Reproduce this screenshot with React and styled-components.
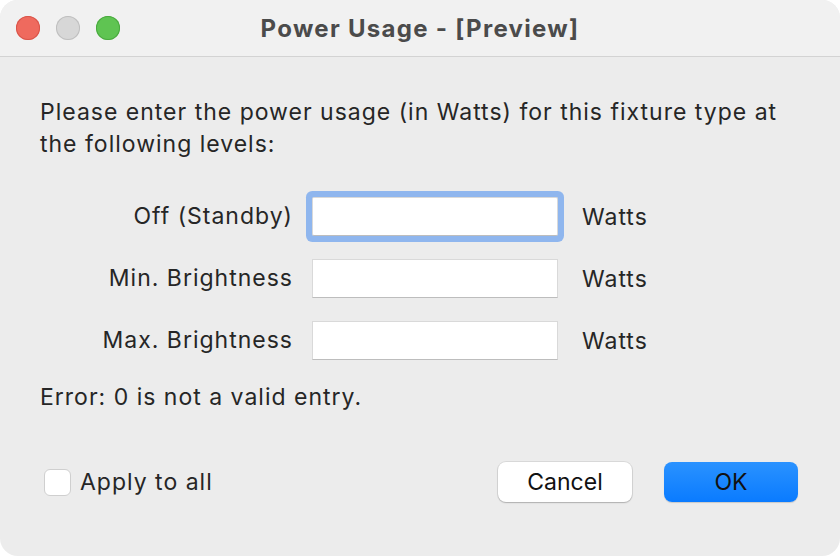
import React from "react";
import styled, { createGlobalStyle } from "styled-components";

const Global = createGlobalStyle`
  html, body { margin: 0; padding: 0; background: #ffffff; }
  body { font-family: Inter, "Noto Sans", "Liberation Sans", sans-serif; }
  * { box-sizing: border-box; }
`;

const Window = styled.div`
  width: 840px;
  height: 556px;
  background: #ececec;
  border-radius: 18px;
  overflow: hidden;
  display: flex;
  flex-direction: column;
  color: #262626;
`;

const TitleBar = styled.div`
  height: 57px;
  flex: none;
  background: #f1f1f1;
  border-bottom: 1px solid #d3d3d3;
  display: flex;
  align-items: center;
  position: relative;
  padding-left: 16px;
`;

const Lights = styled.div`
  display: flex;
  gap: 16px;
  position: relative;
  z-index: 1;
`;

const Light = styled.span`
  width: 24px;
  height: 24px;
  border-radius: 50%;
  background: ${(p) => p.$c};
  box-shadow: inset 0 0 0 1px ${(p) => p.$b};
`;

const Title = styled.div`
  position: absolute;
  inset: 0;
  display: flex;
  align-items: center;
  justify-content: center;
  font-size: 24px;
  font-weight: 700;
  color: #4b4b4b;
  letter-spacing: 1.3px;
`;

const Content = styled.div`
  flex: 1;
  display: flex;
  flex-direction: column;
  padding: 39px 42px 54px 40px;
  font-size: 23px;
  letter-spacing: 1px;
`;

const Intro = styled.p`
  margin: 0;
  line-height: 32px;
`;

const Form = styled.div`
  margin-top: 37px;
  display: grid;
  grid-template-columns: 272px 246px auto;
  row-gap: 23px;
  align-items: center;
`;

const Label = styled.label`
  text-align: right;
  padding-right: 19px;
  line-height: 39px;
  white-space: nowrap;
`;

const Input = styled.input`
  width: 246px;
  height: 39px;
  border: 1px solid #d9d9d9;
  border-bottom-color: #bdbdbd;
  background: #ffffff;
  outline: none;
  font: inherit;
  padding: 0 6px;
  border-radius: ${(p) => (p.$focus ? "2px" : "0")};
  box-shadow: ${(p) => (p.$focus ? "0 0 0 6px #8fb6ee" : "none")};
`;

const Unit = styled.span`
  padding-left: 24px;
`;

const Error = styled.div`
  margin-top: 23px;
  line-height: 28px;
`;

const Footer = styled.div`
  margin-top: auto;
  display: flex;
  align-items: center;
`;

const CheckRow = styled.label`
  display: flex;
  align-items: center;
  gap: 9px;
  margin-left: 4px;
`;

const Box = styled.span`
  width: 27px;
  height: 27px;
  border-radius: 6px;
  background: #ffffff;
  border: 1px solid #cfcfcf;
`;

const Spacer = styled.div`
  flex: 1;
`;

const Button = styled.button`
  width: 134px;
  height: 40px;
  border-radius: 8px;
  font: inherit;
  color: #111111;
  border: none;
  padding: 0;
  margin-left: ${(p) => (p.$gap ? "32px" : "0")};
  background: ${(p) =>
    p.$primary ? "linear-gradient(#2a92ff, #0a7bff)" : "#ffffff"};
  box-shadow: ${(p) =>
    p.$primary
      ? "0 1px 1px rgba(0,0,0,0.15)"
      : "0 0 0 1px rgba(0,0,0,0.08), 0 1px 1.5px rgba(0,0,0,0.2)"};
`;

const rows = ["Off (Standby)", "Min. Brightness", "Max. Brightness"];

export default function App() {
  return (
    <>
      <Global />
      <Window>
        <TitleBar>
          <Lights>
            <Light $c="#ef6a5e" $b="#d8554a" />
            <Light $c="#d7d7d7" $b="#bfbfbf" />
            <Light $c="#5fc452" $b="#4aa93f" />
          </Lights>
          <Title>Power Usage - [Preview]</Title>
        </TitleBar>
        <Content>
          <Intro>
            Please enter the power usage (in Watts) for this fixture type at
            the following levels:
          </Intro>
          <Form>
            {rows.map((r, i) => (
              <React.Fragment key={r}>
                <Label>{r}</Label>
                <Input $focus={i === 0} />
                <Unit>Watts</Unit>
              </React.Fragment>
            ))}
          </Form>
          <Error>Error: 0 is not a valid entry.</Error>
          <Footer>
            <CheckRow>
              <Box />
              Apply to all
            </CheckRow>
            <Spacer />
            <Button>Cancel</Button>
            <Button $primary $gap>
              OK
            </Button>
          </Footer>
        </Content>
      </Window>
    </>
  );
}
